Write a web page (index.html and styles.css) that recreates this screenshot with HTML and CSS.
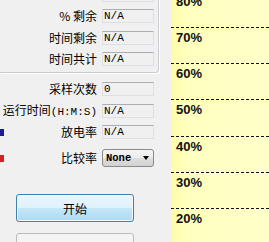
FILE: index.html
```html
<!DOCTYPE html>
<html>
<head>
<meta charset="utf-8">
<link rel="stylesheet" href="styles.css">
</head>
<body>
<div class="app">
  <div class="left">
    <div class="group group-top">
      <div class="row"><span class="label"></span><span class="box"></span></div>
      <div class="row"><span class="label">% 剩余</span><span class="box">N/A</span></div>
      <div class="row"><span class="label">时间剩余</span><span class="box">N/A</span></div>
      <div class="row"><span class="label">时间共计</span><span class="box">N/A</span></div>
    </div>
    <div class="group group-bottom">
      <div class="row"><span class="label">采样次数</span><span class="box">0</span></div>
      <div class="row"><span class="label">运行时间<span class="en">(H:M:S)</span></span><span class="box">N/A</span></div>
      <div class="row"><span class="swatch blue"></span><span class="label">放电率</span><span class="box">N/A</span></div>
      <div class="row combo-row"><span class="swatch red"></span><span class="label">比较率</span><span class="combo"><span class="combo-text">None</span><span class="arrow"></span></span></div>
      <div class="buttons">
        <button class="btn primary">开始</button>
        <button class="btn disabled">停止</button>
      </div>
    </div>
  </div>
  <div class="chart">
    <div class="ticks">
      <div class="tick">80%</div>
      <div class="tick">70%</div>
      <div class="tick">60%</div>
      <div class="tick">50%</div>
      <div class="tick">40%</div>
      <div class="tick">30%</div>
      <div class="tick">20%</div>
      <div class="tick">10%</div>
    </div>
  </div>
</div>
</body>
</html>
```
FILE: styles.css
```css
html, body {
  margin: 0;
  padding: 0;
}
body {
  width: 269px;
  height: 242px;
  overflow: hidden;
  background: #f0f0f0;
  font-family: "Noto Sans CJK SC", sans-serif;
  font-size: 12px;
  color: #000;
}
.app {
  display: flex;
  height: 242px;
}
.left {
  width: 171px;
  flex: none;
  display: flex;
  flex-direction: column;
}
.group {
  display: flex;
  flex-direction: column;
  gap: 7.5px;
}
.group-top {
  width: 159px;
  box-sizing: border-box;
  margin-top: -12.5px;
  padding-bottom: 6px;
  border-right: 1px solid #c9cdd2;
  border-bottom: 1px solid #c9cdd2;
  border-bottom-right-radius: 4px;
  box-shadow: 1px 1px 0 #fff;
}
.group-bottom {
  padding-top: 9px;
}
.row {
  display: flex;
  align-items: center;
  height: 14px;
  line-height: 14px;
}
.label {
  width: 97px;
  margin-right: 5px;
  text-align: right;
  white-space: nowrap;
}
.swatch + .label {
  width: 93px;
}
.swatch {
  width: 4px;
  height: 7px;
  flex: none;
}
.swatch.blue {
  background: #1c1c96;
}
.swatch.red {
  background: #d42020;
}
.en {
  font-family: "Liberation Mono", monospace;
  font-size: 11px;
}
.box {
  width: 52px;
  height: 14px;
  box-sizing: border-box;
  border: 1px solid #dcdfe4;
  border-top-color: #abadb3;
  padding-left: 1px;
  font-family: "Liberation Mono", monospace;
  font-size: 11px;
  line-height: 12px;
}
.combo-row {
  height: 18px;
  margin-top: 2.5px;
}
.combo {
  width: 52px;
  height: 18px;
  box-sizing: border-box;
  border: 1px solid #8a8a8a;
  border-radius: 3px;
  background: linear-gradient(#f4f4f4 0%, #ececec 50%, #dedede 50%, #d2d2d2 100%);
  display: flex;
  align-items: center;
  justify-content: space-between;
  padding: 0 3px 0 3px;
}
.combo-text {
  font-family: "Liberation Mono", monospace;
  font-size: 10.5px;
  font-weight: bold;
  line-height: 16px;
}
.arrow {
  width: 0;
  height: 0;
  border-left: 3.5px solid transparent;
  border-right: 3.5px solid transparent;
  border-top: 4px solid #000;
  margin-right: 1px;
}
.buttons {
  display: flex;
  flex-direction: column;
  gap: 11px;
  margin-top: 19.5px;
  padding-left: 16px;
}
.btn {
  width: 118px;
  height: 28px;
  box-sizing: border-box;
  border-radius: 3px;
  font-family: "Noto Sans CJK SC", sans-serif;
  font-size: 12px;
  padding: 0;
  flex: none;
}
.btn.primary {
  border: 1px solid #3c7fb1;
  background: linear-gradient(#eaf6fd 0%, #dff2fc 50%, #c6e7f8 50%, #acdaf3 100%);
  box-shadow: inset 0 0 0 1px #f4fbff;
  color: #000;
}
.btn.disabled {
  border: 1px solid #b8bcbf;
  background: #f4f4f4;
  color: #8d8d8d;
}
.chart {
  flex: 1;
  background: linear-gradient(to right, #fffba6 0px, #ffffbe 14px, #ffffc9 100%);
  overflow: hidden;
}
.ticks {
  margin-top: -9.2px;
  display: flex;
  flex-direction: column;
}
.tick {
  height: 36.2px;
  flex: none;
  box-sizing: border-box;
  padding: 3px 0 0 5px;
  background: repeating-linear-gradient(to right, #111 0 3px, transparent 3px 5px) top left / 100% 1px no-repeat;
  font-family: "Liberation Sans", Arial, sans-serif;
  font-weight: bold;
  font-size: 13px;
  line-height: 15px;
  color: #111;
}
```
